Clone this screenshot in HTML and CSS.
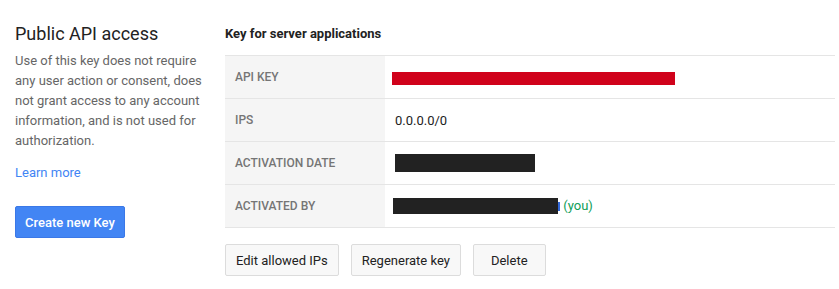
FILE: index.html
```html
<!DOCTYPE html>
<html lang="en">
<head>
    <meta charset="UTF-8">
    <title>Credentials</title>
    <link rel="stylesheet" href="styles.css">
</head>
<body>
    <div class="page">
        <div class="side">
            <h2>Public API access</h2>
            <p class="side-desc">Use of this key does not require any user action or consent, does not grant access to any account information, and is not used for authorization.</p>
            <a class="learn" href="#">Learn more</a>
            <button class="primary-btn">Create new Key</button>
        </div>
        <div class="key-panel">
            <h3>Key for server applications</h3>
            <table class="key-table">
                <tr>
                    <th>API KEY</th>
                    <td><span class="redact red"></span></td>
                </tr>
                <tr>
                    <th>IPS</th>
                    <td>0.0.0.0/0</td>
                </tr>
                <tr>
                    <th>ACTIVATION DATE</th>
                    <td><span class="redact date"></span></td>
                </tr>
                <tr>
                    <th>ACTIVATED BY</th>
                    <td><span class="redact user"></span><span class="mail-tail"></span> <span class="you">(you)</span></td>
                </tr>
            </table>
            <div class="btn-row">
                <button>Edit allowed IPs</button>
                <button>Regenerate key</button>
                <button class="delete">Delete</button>
            </div>
        </div>
    </div>
</body>
</html>
```

FILE: styles.css
```css
body {
    margin: 0;
    background: #fff;
    font-family: Roboto, Arial, sans-serif;
    color: #222;
}
.page {
    display: flex;
    padding: 22px 0 0 15px;
}
.side {
    width: 198px;
    flex: none;
}
.side h2 {
    margin: 0;
    font-size: 18px;
    font-weight: 400;
    line-height: 24px;
    color: #222;
}
.side-desc {
    margin: 5px 0 0 0;
    font-size: 13px;
    line-height: 20px;
    color: #666;
}
.learn {
    display: block;
    margin-top: 12px;
    font-size: 13px;
    line-height: 20px;
    color: #4285f4;
    text-decoration: none;
}
.primary-btn {
    display: block;
    margin-top: 23px;
    height: 32px;
    padding: 0 9px;
    background: #4285f4;
    border: 1px solid #3b78e7;
    border-radius: 2px;
    color: #fff;
    font-family: Roboto, Arial, sans-serif;
    font-size: 13px;
    font-weight: 500;
}
.key-panel {
    flex: 1;
    margin-left: 12px;
    margin-right: 4px;
}
.key-panel h3 {
    margin: 0;
    font-size: 13px;
    font-weight: 700;
    line-height: 20px;
    padding-top: 2px;
}
.key-table {
    width: 100%;
    margin-top: 11px;
    border-collapse: collapse;
    font-size: 13px;
}
.key-table tr {
    border-top: 1px solid #e5e5e5;
    border-bottom: 1px solid #e5e5e5;
}
.key-table th {
    width: 140px;
    height: 42px;
    padding: 0 10px;
    background: #f5f5f5;
    color: #757575;
    font-size: 12px;
    font-weight: 500;
    text-align: left;
    vertical-align: middle;
}
.key-table td {
    padding: 0 10px;
    color: #222;
    vertical-align: middle;
}
.redact {
    display: inline-block;
    vertical-align: middle;
}
.redact.red {
    width: 283px;
    height: 13px;
    background: #d0021b;
    margin-left: -3px;
}
.redact.date {
    width: 140px;
    height: 18px;
    background: #222;
}
.redact.user {
    width: 165px;
    height: 16px;
    background: #222;
    margin-left: -2px;
}
.mail-tail {
    display: inline-block;
    vertical-align: middle;
    width: 2px;
    height: 9px;
    background: #3367d6;
}
.you {
    color: #0f9d58;
}
.btn-row {
    display: flex;
    gap: 12px;
    margin-top: 16px;
}
.btn-row button {
    height: 32px;
    padding: 0 10px;
    background: #f8f8f8;
    border: 1px solid #dcdcdc;
    border-radius: 2px;
    color: #222;
    font-family: Roboto, Arial, sans-serif;
    font-size: 13px;
}
.btn-row .delete {
    padding: 0 17px;
}
```
